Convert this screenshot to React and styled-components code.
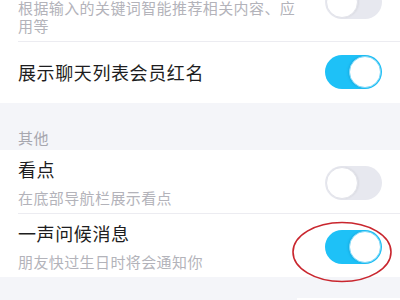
import React from "react";
import styled, { createGlobalStyle } from "styled-components";

const Global = createGlobalStyle`
  html, body { margin: 0; padding: 0; background: #f4f5f9; }
  body { font-family: "Noto Sans CJK SC", "Noto Sans", sans-serif; overflow: hidden; }
`;

const Page = styled.div`
  width: 400px;
  height: 300px;
  overflow: hidden;
  background: #f4f5f9;
`;

const Card = styled.div`
  background: #ffffff;
  margin-top: ${(p) => p.$offset || 0}px;
`;

const Row = styled.div`
  display: flex;
  align-items: center;
  margin-left: 18px;
  padding: ${(p) => (p.$single ? "13px 18px 14px 0" : "8px 18px 6px 0")};
  border-top: ${(p) => (p.$divided ? "1px solid #ececf1" : "none")};
  position: relative;
`;

const TextCol = styled.div`
  flex: 1;
  min-width: 0;
  padding-right: 20px;
`;

const Title = styled.div`
  font-size: 18px;
  line-height: 22px;
  letter-spacing: 0.6px;
  color: #1d1d20;
`;

const Sub = styled.div`
  margin-top: 9px;
  font-size: 15px;
  line-height: 18px;
  letter-spacing: 0.4px;
  color: #b3b3ba;
`;

const SectionHeader = styled.div`
  padding: 26px 18px 3px;
  font-size: 15px;
  line-height: 18px;
  letter-spacing: 0.5px;
  color: #a7a7af;
`;

const SwitchWrap = styled.div`
  position: relative;
  flex: none;
`;

const Track = styled.div`
  width: 57px;
  height: 34px;
  border-radius: 17px;
  box-sizing: border-box;
  background: ${(p) => (p.$on ? "#1ec1f7" : "#e7e8ef")};
  display: flex;
  align-items: center;
  justify-content: ${(p) => (p.$on ? "flex-end" : "flex-start")};
  padding: 1px;
`;

const Knob = styled.div`
  width: 32px;
  height: 32px;
  border-radius: 50%;
  background: #ffffff;
  box-sizing: border-box;
  border: 1px solid ${(p) => (p.$on ? "#7fd8f8" : "#e2e3ea")};
  box-shadow: ${(p) => (p.$on ? "-1px 0 2px rgba(0,120,170,0.25)" : "1px 0 2px rgba(0,0,0,0.06)")};
`;

const Annotation = styled.svg`
  position: absolute;
  left: -34px;
  top: -9px;
  width: 102px;
  height: 62px;
  overflow: visible;
  pointer-events: none;
`;

const Footer = styled.div`
  display: flex;
  justify-content: flex-end;
  padding-top: 21px;
`;

const FooterBox = styled.div`
  width: 103px;
  height: 10px;
  background: #ffffff;
`;

function Switch({ on, circled }) {
  return (
    <SwitchWrap>
      <Track $on={on}>
        <Knob $on={on} />
      </Track>
      {circled && (
        <Annotation viewBox="0 0 102 62">
          <ellipse cx="51" cy="31" rx="49" ry="29.5" fill="none" stroke="#c9262e" strokeWidth="1.6" />
        </Annotation>
      )}
    </SwitchWrap>
  );
}

export default function App() {
  return (
    <Page>
      <Global />
      <Card $offset={-40}>
        <Row>
          <TextCol>
            <Title>关键词推荐</Title>
            <Sub>根据输入的关键词智能推荐相关内容、应用等</Sub>
          </TextCol>
          <Switch on={false} />
        </Row>
        <Row $divided $single>
          <TextCol>
            <Title>展示聊天列表会员红名</Title>
          </TextCol>
          <Switch on />
        </Row>
      </Card>
      <SectionHeader>其他</SectionHeader>
      <Card>
        <Row>
          <TextCol>
            <Title>看点</Title>
            <Sub>在底部导航栏展示看点</Sub>
          </TextCol>
          <Switch on={false} />
        </Row>
        <Row $divided>
          <TextCol>
            <Title>一声问候消息</Title>
            <Sub>朋友快过生日时将会通知你</Sub>
          </TextCol>
          <Switch on circled />
        </Row>
      </Card>
      <Footer>
        <FooterBox />
      </Footer>
    </Page>
  );
}
